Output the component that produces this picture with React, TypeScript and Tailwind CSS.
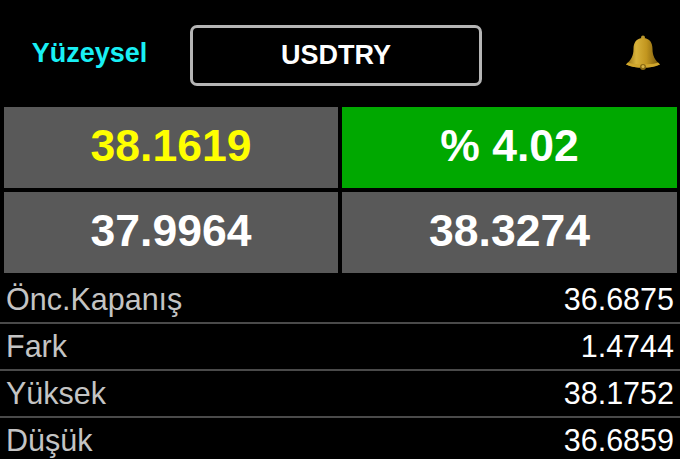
const tiles = [
  { text: "38.1619", bg: "bg-[#595959]", color: "text-[#ffff00]" },
  { text: "% 4.02", bg: "bg-[#00a800]", color: "text-white" },
  { text: "37.9964", bg: "bg-[#595959]", color: "text-white" },
  { text: "38.3274", bg: "bg-[#595959]", color: "text-white" },
];

const rows = [
  { label: "Önc.Kapanış", value: "36.6875" },
  { label: "Fark", value: "1.4744" },
  { label: "Yüksek", value: "38.1752" },
  { label: "Düşük", value: "36.6859" },
];

const Bell = () => (
  <svg width="36" height="36" viewBox="0 0 36 36">
    <defs>
      <linearGradient id="bell" x1="0" y1="0" x2="1" y2="0">
        <stop offset="0" stopColor="#8f6c12" />
        <stop offset="0.3" stopColor="#d8b23a" />
        <stop offset="0.6" stopColor="#c2961f" />
        <stop offset="1" stopColor="#6f510a" />
      </linearGradient>
    </defs>
    <circle cx="18" cy="2.500" r="2" fill="#b8962e" />
    <path d="M18 3C11 3 8.500 8 8.500 14C8.500 21 6 25 1 29.500C6 32 12 32.500 18 32.500C24 32.500 30 32 35 29.500C30 25 27.500 21 27.500 14C27.500 8 25 3 18 3Z" fill="url(#bell)" />
    <path d="M1 29.500C6 32 12 32.500 18 32.500C24 32.500 30 32 35 29.500L33 27.500C28 30 8 30 3 27.500Z" fill="#d0a62c" />
    <circle cx="18" cy="32" r="3" fill="#8a6a14" />
    <circle cx="18" cy="31.500" r="1.500" fill="#d9b648" />
  </svg>
);

export default function App() {
  return (
    <div className="w-[680px] h-[459px] overflow-hidden bg-black font-['Liberation_Sans',Arial,sans-serif]">
      <div className="h-[107px] flex items-start">
        <div className="w-[190px] h-[107px] flex items-center justify-center pr-[11px] pb-[1px]">
          <span className="text-[27px] leading-none font-bold text-[#19f0f5]">Yüzeysel</span>
        </div>
        <button className="mt-[25px] w-[292px] h-[61px] rounded-[7px] border-[3px] border-[#b5b5b5] bg-black text-[27px] font-bold text-white">
          USDTRY
        </button>
        <div className="flex-1 flex justify-end pt-[35px] pr-[19px]">
          <Bell />
        </div>
      </div>
      <div className="grid grid-cols-[334px_335px] grid-rows-[81px_81px] gap-x-[4px] gap-y-[4px] pl-[4px]">
        {tiles.map((tile) => (
          <div
            key={tile.text}
            className={`flex items-center justify-center pb-[2px] text-[44.5px] leading-none font-bold ${tile.bg} ${tile.color}`}
          >
            {tile.text}
          </div>
        ))}
      </div>
      <div className="mt-[4px]">
        {rows.map((row, i) => (
          <div
            key={row.label}
            className={`flex items-center justify-between h-[47px] pl-[6px] pr-[6px] border-b-2 ${i < rows.length - 1 ? "border-[#4a4a4a]" : "border-transparent"}`}
          >
            <span className="text-[30.5px] leading-none text-[#c4c4c4]">{row.label}</span>
            <span className="text-[30.5px] leading-none text-white">{row.value}</span>
          </div>
        ))}
      </div>
    </div>
  );
}
